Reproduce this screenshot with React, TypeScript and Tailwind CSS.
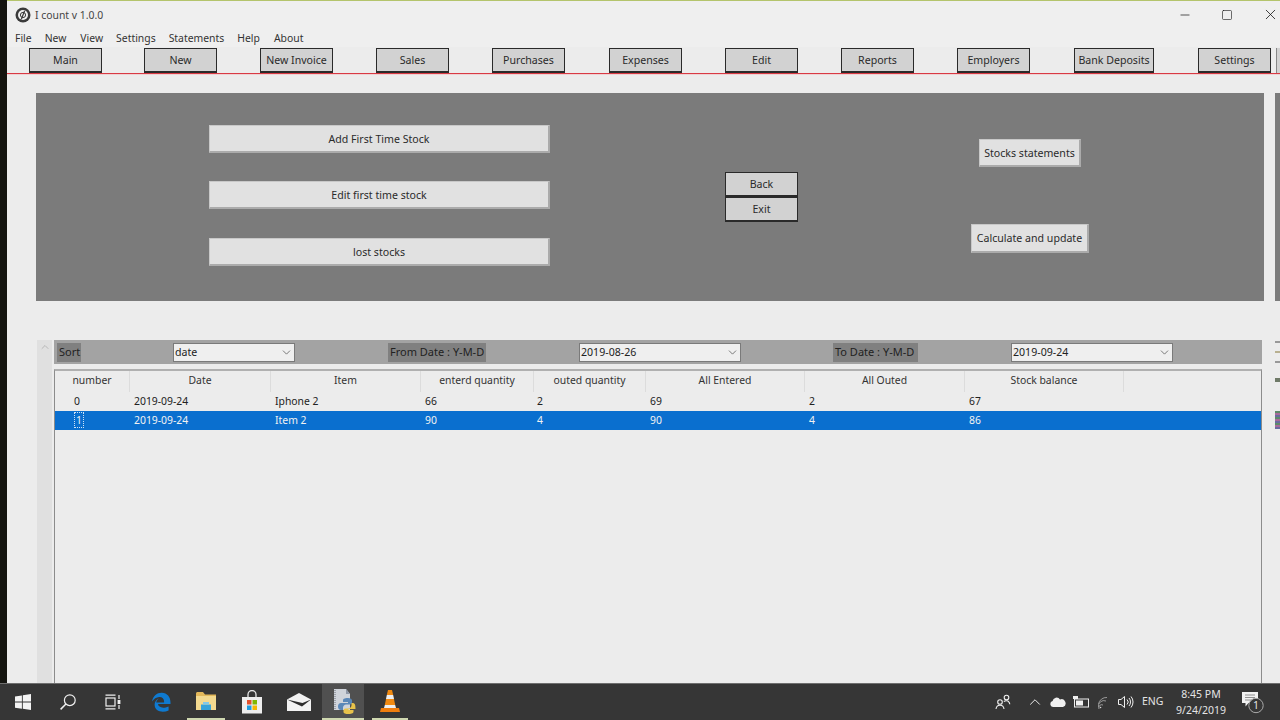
import { ChevronDown, ChevronUp, Minus, Square, X } from "lucide-react";

const tabs = [
  { label: "Main", w: "w-[73px]", ml: "ml-[22px]" },
  { label: "New", w: "w-[73px]", ml: "ml-[42px]" },
  { label: "New Invoice", w: "w-[73px]", ml: "ml-[43px]" },
  { label: "Sales", w: "w-[73px]", ml: "ml-[43px]" },
  { label: "Purchases", w: "w-[73px]", ml: "ml-[43px]" },
  { label: "Expenses", w: "w-[73px]", ml: "ml-[44px]" },
  { label: "Edit", w: "w-[73px]", ml: "ml-[43px]" },
  { label: "Reports", w: "w-[73px]", ml: "ml-[43px]" },
  { label: "Employers", w: "w-[73px]", ml: "ml-[43px]" },
  { label: "Bank Deposits", w: "w-[80px]", ml: "ml-[44px]" },
  { label: "Settings", w: "w-[73px]", ml: "ml-[44px]" },
];

const menus = [
  { label: "File", ml: "ml-[8px]" },
  { label: "New", ml: "ml-[13px]" },
  { label: "View", ml: "ml-[14px]" },
  { label: "Settings", ml: "ml-[13px]" },
  { label: "Statements", ml: "ml-[13px]" },
  { label: "Help", ml: "ml-[13px]" },
  { label: "About", ml: "ml-[14px]" },
];

const columns = [
  { label: "number", w: "w-[75px]", pl: "pl-[19px]" },
  { label: "Date", w: "w-[141px]", pl: "pl-[4px]" },
  { label: "Item", w: "w-[150px]", pl: "pl-[4px]" },
  { label: "enterd quantity", w: "w-[113px]", pl: "pl-[4px]" },
  { label: "outed quantity", w: "w-[112px]", pl: "pl-[3px]" },
  { label: "All Entered", w: "w-[159px]", pl: "pl-[4px]" },
  { label: "All Outed", w: "w-[160px]", pl: "pl-[4px]" },
  { label: "Stock balance", w: "w-[159px]", pl: "pl-[4px]" },
];

const rows = [
  ["0", "2019-09-24", "Iphone 2", "66", "2", "69", "2", "67"],
  ["1", "2019-09-24", "Item 2", "90", "4", "90", "4", "86"],
];

function AppLogo() {
  return (
    <svg width="16" height="16" viewBox="0 0 16 16" className="shrink-0">
      <circle cx="8" cy="8" r="7.5" fill="#3a3a3a" />
      <circle cx="8" cy="8" r="5" fill="#efefef" />
      <circle cx="8" cy="8" r="2.6" fill="none" stroke="#3a3a3a" strokeWidth="1" />
      <path d="M9.600 3.800 6.400 12.200" stroke="#3a3a3a" strokeWidth="1.2" />
    </svg>
  );
}

function PanelButton({ label, className }: { label: string; className: string }) {
  return (
    <button className={`flex items-center justify-center bg-[#e1e1e1] border border-[#c8c8c8] border-b-2 border-r-2 border-b-[#ababab] border-r-[#ababab] pt-[2px] text-[#2a2a2a] ${className}`}>
      {label}
    </button>
  );
}

function DarkButton({ label, className }: { label: string; className: string }) {
  return (
    <button className={`flex items-center justify-center bg-[#d2d2d2] border border-[#2a2a2a] border-b-2 pt-[2px] text-[#2a2a2a] ${className}`}>
      {label}
    </button>
  );
}

function FilterLabel({ label, className }: { label: string; className: string }) {
  return <div className={`h-[19px] flex items-center bg-[#808080] text-[11px] text-[#222] pl-[2px] whitespace-nowrap ${className}`}>{label}</div>;
}

function FilterSelect({ value, className }: { value: string; className: string }) {
  return (
    <div className={`h-[19px] flex items-center justify-between bg-[#efefef] border border-[#7a7a7a] pl-[1px] pr-[1px] text-[#222] ${className}`}>
      <span className="pt-[2px]">{value}</span>
      <ChevronDown size={13} strokeWidth={1.4} color="#555" />
    </div>
  );
}

function WindowsIcon() {
  return (
    <svg width="16" height="16" viewBox="0 0 16 16">
      <path d="M0 2.400 6.900 1.400V7.600H0ZM7.800 1.200 16 0V7.600H7.800ZM0 8.500H6.900V14.700L0 13.700ZM7.800 8.500H16V16L7.800 14.800Z" fill="#f4f4f4" />
    </svg>
  );
}

function SearchIcon() {
  return (
    <svg width="16" height="16" viewBox="0 0 16 16" fill="none" stroke="#f0f0f0" strokeWidth="1.2">
      <circle cx="9.800" cy="6.200" r="5.400" />
      <path d="M5.900 10 .6 15.400" strokeWidth="1.500" />
    </svg>
  );
}

function TaskViewIcon() {
  return (
    <svg width="16" height="16" viewBox="0 0 16 16" fill="none" stroke="#f0f0f0" strokeWidth="1.2">
      <rect x="1" y="4" width="9" height="8" />
      <path d="M0.500 1.200H10.500M0.500 14.800H10.500M14 1V5M14 11V15" />
      <rect x="12.600" y="6" width="2.800" height="4" fill="#f0f0f0" stroke="none" />
    </svg>
  );
}

function EdgeIcon() {
  return (
    <svg width="20" height="20" viewBox="0 0 20 20">
      <path d="M1 9.500C2 3.500 6.500.5 11 .8c5 .3 8.500 4 8.500 9.700v1.600H7c.2 3.200 4.800 5 10.600 2.300v4C11.500 21.300 3.600 19.500 3.600 12.500c0-2.500 1.600-4.800 4.300-6-1.700 1.400-2.400 2.700-2.700 3.900h7.900c.3-3.400-2-5.600-5-5.300C5.600 5.300 2.800 7 1 9.500Z" fill="#0f7ad0" />
    </svg>
  );
}

function FolderIcon() {
  return (
    <svg width="20" height="18" viewBox="0 0 20 18">
      <path d="M0 1.500C0 .7.700 0 1.500 0H7l2 2.500h11V18H0Z" fill="#e3b85a" />
      <rect x="0" y="4" width="20" height="14" fill="#f3d98f" />
      <path d="M5 12.500h10V18H5Z" fill="#36a3d9" />
      <path d="M7 10h6v2.500H7Z" fill="#7fc8ea" />
    </svg>
  );
}

function StoreIcon() {
  return (
    <svg width="22" height="24" viewBox="0 0 22 24">
      <path d="M7 7V4.500a4 4 0 0 1 8 0V7" fill="none" stroke="#e8e8e8" strokeWidth="1.300" />
      <rect x="1" y="7" width="20" height="16.500" fill="#eeeeee" />
      <rect x="6" y="10" width="4.500" height="4.500" fill="#e2502c" />
      <rect x="11.500" y="10" width="4.500" height="4.500" fill="#7fb800" />
      <rect x="6" y="15.500" width="4.500" height="4.500" fill="#1f9de0" />
      <rect x="11.500" y="15.500" width="4.500" height="4.500" fill="#f6b800" />
    </svg>
  );
}

function MailIcon() {
  return (
    <svg width="24" height="18" viewBox="0 0 24 18">
      <path d="M0 6.500 12 0l12 6.500V18H0Z" fill="#f2f2f2" />
      <path d="M0 6.500 15 13.500l9-7-8.500 3.500Z" fill="#2d2d2d" />
    </svg>
  );
}

function PythonFileIcon() {
  return (
    <svg width="23" height="25" viewBox="0 0 23 25">
      <path d="M1 0H13L17 5V21H1Z" fill="#cfd3da" />
      <path d="M2 1V20" stroke="#8b8f96" strokeWidth="1.500" strokeDasharray="1 1" />
      <path d="M13 0V5H17Z" fill="#8f98a8" />
      <path d="M15 9c-4 0-5 1-5 2.500V13h5v1H8c-2 0-3 1.500-3 3.500S6 21 8 21h2v-2.500c0-1.500 1.500-3 3-3h4c1.500 0 2-1 2-2V11.500C19 10 17.500 9 15 9Z" fill="#5a87b8" />
      <path d="M15.500 25c4 0 5-1 5-2.500V21h-5v-1h7c0-4-.5-6-3-6h-1v2.500c0 1.500-1.500 3-3 3h-3c-1.500 0-2 1-2 2V23c0 1.500 2 2 5 2Z" fill="#e8c24a" />
    </svg>
  );
}

function VlcIcon() {
  return (
    <svg width="20" height="24" viewBox="0 0 20 24">
      <path d="M8 1h4l1.200 5H6.800Z" fill="#f08a12" />
      <path d="M6.800 6h6.400l.8 4H6Z" fill="#efefef" />
      <path d="M6 10h8l1.200 6H4.800Z" fill="#f08a12" />
      <path d="M4.800 16h10.400l.8 3H4Z" fill="#efefef" />
      <path d="M1 19h18l1 4H0Z" fill="#ef7d0e" />
    </svg>
  );
}

function PeopleIcon() {
  return (
    <svg width="16" height="16" viewBox="0 0 16 16" fill="none" stroke="#f0f0f0" strokeWidth="1.100">
      <circle cx="5" cy="8" r="2.300" />
      <path d="M1 15c.3-2.500 1.800-3.800 4-3.800S8.700 12.500 9 15" />
      <circle cx="11.500" cy="3.500" r="2.300" />
      <path d="M8.800 7.500c1.500-1 4-1 5 .3.600.7.900 1.500 1 2.500" />
    </svg>
  );
}

function CloudIcon() {
  return (
    <svg width="16" height="10" viewBox="0 0 16 10">
      <path d="M3 10a3 3 0 0 1-.4-5.900A4 4 0 0 1 10 2.500 3.500 3.500 0 0 1 13 10Z" fill="#efefef" />
    </svg>
  );
}

function BatteryIcon() {
  return (
    <svg width="16" height="12" viewBox="0 0 16 12" fill="none">
      <rect x="1.500" y="3" width="14" height="8" stroke="#efefef" />
      <rect x="3" y="4.500" width="7" height="5" fill="#efefef" />
      <path d="M0 0H5V3H0Z" fill="#efefef" />
    </svg>
  );
}

function WifiIcon() {
  return (
    <svg width="13" height="13" viewBox="0 0 13 13" fill="none" stroke="#9a9a9a" strokeWidth="1">
      <path d="M.5 8A8 8 0 0 1 9 1.500M.5 11A5.500 5.500 0 0 1 8 5M1 13a3 3 0 0 1 4-4" />
      <circle cx="2.500" cy="11.500" r=".8" fill="#d8d8d8" stroke="none" />
    </svg>
  );
}

function SpeakerIcon() {
  return (
    <svg width="16" height="14" viewBox="0 0 16 14" fill="none" stroke="#efefef" strokeWidth="1">
      <path d="M.5 4.500H3L6.500 1.500V12.500L3 9.500H.5Z" />
      <path d="M9 4.500a3.500 3.500 0 0 1 0 5M11 3a6 6 0 0 1 0 8M13 1.500a8.500 8.500 0 0 1 0 11" />
    </svg>
  );
}

function NotificationIcon() {
  return (
    <svg width="24" height="24" viewBox="0 0 24 24">
      <path d="M1 2H17V13H7.500L4.500 16.500V13H1Z" fill="#f2f2f2" />
      <path d="M4 5H14M4 7.500H14M4 10H11" stroke="#777" strokeWidth=".8" />
      <circle cx="15" cy="15.500" r="7.200" fill="#363636" stroke="#aaa" strokeWidth="1" />
    </svg>
  );
}

function Taskbar() {
  return (
    <div className="h-[37px] shrink-0 flex items-stretch bg-[#363636] border-t border-[#6e6e6e] text-[#e4e4e4]">
      <div className="w-[45px] flex items-center justify-center"><WindowsIcon /></div>
      <div className="w-[45px] flex items-center justify-center"><SearchIcon /></div>
      <div className="w-[46px] flex items-center justify-center"><TaskViewIcon /></div>
      <div className="w-[49px] flex items-center justify-center"><EdgeIcon /></div>
      <div className="ml-[2px] w-[38px] flex items-center justify-center border-b-2 border-[#cfd8b0]"><FolderIcon /></div>
      <div className="w-[54px] flex items-center justify-center"><StoreIcon /></div>
      <div className="w-[39px] flex items-center justify-center"><MailIcon /></div>
      <div className="ml-[4px] w-[42px] pl-[3px] flex items-center justify-center bg-[#505050] border-b-2 border-[#cfd8b0]"><PythonFileIcon /></div>
      <div className="ml-[8px] w-[36px] flex items-center justify-center border-b-2 border-[#cfd8b0]"><VlcIcon /></div>
      <div className="flex-1 flex items-center justify-end text-[10.5px]">
        <PeopleIcon />
        <ChevronUp size={18} strokeWidth={1.3} color="#efefef" className="ml-[15px]" />
        <div className="ml-[6px]"><CloudIcon /></div>
        <div className="ml-[7px]"><BatteryIcon /></div>
        <div className="ml-[9px]"><WifiIcon /></div>
        <div className="ml-[7px]"><SpeakerIcon /></div>
        <span className="ml-[8px] w-[24px]">ENG</span>
        <div className="ml-[7px] w-[56px] flex flex-col items-center leading-[16px]">
          <span>8:45 PM</span>
          <span>9/24/2019</span>
        </div>
        <div className="relative ml-[12px] mr-[15px] w-[24px] h-[24px]">
          <NotificationIcon />
          <span className="absolute left-[12px] top-[8px] text-[10.5px] leading-[14px]">1</span>
        </div>
      </div>
    </div>
  );
}

export default function App() {
  return (
    <div className="w-[1280px] h-[720px] flex flex-col overflow-hidden bg-[#ececec] text-[10.6px] font-['Noto_Sans','Open_Sans',sans-serif] text-[#222]">
      <div className="flex-1 flex min-h-0">
        <div className="w-[7px] shrink-0 bg-[#14140f]" />
        <div className="flex-1 min-w-0 flex flex-col border-t border-[#b4c46c] relative">
          {/* title bar */}
          <div className="h-[27px] shrink-0 flex items-center pl-[8px] bg-[#efefef]">
            <AppLogo />
            <span className="ml-[4px] pt-[2px] text-[10.4px] text-[#444]">I count v 1.0.0</span>
            <div className="ml-auto flex items-center mr-[1px]">
              <Minus size={14} strokeWidth={1.2} color="#111" />
              <Square size={12} strokeWidth={1.2} color="#111" className="ml-[29px]" />
              <X size={17} strokeWidth={1.1} color="#111" className="ml-[29px]" />
            </div>
          </div>
          {/* menu */}
          <div className="h-[19px] shrink-0 flex items-center pt-[2px] text-[10.4px] text-[#333] bg-[#efefef]">
            {menus.map((m) => (
              <span key={m.label} className={m.ml}>{m.label}</span>
            ))}
          </div>
          {/* tabs */}
          <div className="h-[27px] shrink-0 flex items-start border-b border-[#d83a44] shadow-[0_1px_0_#efd0d2] pt-[1px] overflow-hidden">
            {tabs.map((t) => (
              <DarkButton key={t.label} label={t.label} className={`h-[25px] shrink-0 ${t.w} ${t.ml}`} />
            ))}
            <div className="ml-[5px] w-[20px] h-[25px] shrink-0 bg-[#d2d2d2] border-l border-[#888]" />
          </div>

          {/* top panel */}
          <div className="h-[208px] mt-[19px] shrink-0 flex">
            <div className="ml-[29px] w-[1229px] bg-[#7b7b7b] flex">
              <div className="ml-[173px] mt-[32px] w-[341px] flex flex-col">
                <PanelButton label="Add First Time Stock" className="h-[28px]" />
                <PanelButton label="Edit first time stock" className="h-[28px] mt-[28px]" />
                <PanelButton label="lost stocks" className="h-[28px] mt-[29px]" />
              </div>
              <div className="ml-[175px] mt-[79px] w-[73px] flex flex-col">
                <DarkButton label="Back" className="h-[25px]" />
                <DarkButton label="Exit" className="h-[25px]" />
              </div>
              <div className="ml-[173px] mt-[46px] w-[118px] flex flex-col items-center gap-[57px]">
                <PanelButton label="Stocks statements" className="h-[28px] w-[102px]" />
                <PanelButton label="Calculate and update" className="h-[29px] w-[118px]" />
              </div>
            </div>
            <div className="ml-[11px] w-[5px] bg-[#7b7b7b]" />
          </div>

          {/* lower section */}
          <div className="flex-1 min-h-0 mt-[39px] flex">
            <div className="ml-[30px] mr-[2px] w-[15px] shrink-0 bg-[#e0e0e0] flex justify-center pt-[1px]">
              <ChevronUp size={12} strokeWidth={1.5} color="#aaa" />
            </div>
            <div className="w-[1208px] flex flex-col">
              <div className="h-[24px] shrink-0 flex items-center bg-[#a3a3a3]">
                <FilterLabel label="Sort" className="ml-[3px] w-[24px]" />
                <FilterSelect value="date" className="ml-[92px] w-[122px]" />
                <FilterLabel label="From Date : Y-M-D" className="ml-[93px] w-[98px]" />
                <FilterSelect value="2019-08-26" className="ml-[93px] w-[162px]" />
                <FilterLabel label="To Date : Y-M-D" className="ml-[92px] w-[85px]" />
                <FilterSelect value="2019-09-24" className="ml-[93px] w-[162px]" />
              </div>
              <div className="flex-1 mt-[5px] border-t-2 border-[#b0b0b0] border-l border-l-[#8c8c8c] border-r border-r-[#8c8c8c] text-[10.4px]">
                <div className="h-[21px] flex text-[#333]">
                  {columns.map((c) => (
                    <div key={c.label} className={`${c.w} flex items-center justify-center border-r border-[#dcdcdc] pb-[2px]`}>
                      {c.label}
                    </div>
                  ))}
                </div>
                <div className="h-[19px] flex items-center text-[#222]">
                  {rows[0].map((v, i) => (
                    <div key={i} className={`${columns[i].w} ${columns[i].pl}`}>{v}</div>
                  ))}
                </div>
                <div className="h-[19px] flex items-center bg-[#0a6fcf] text-[#f2f2f2]">
                  {rows[1].map((v, i) => (
                    <div key={i} className={`${columns[i].w} ${columns[i].pl}`}>
                      {i === 0 ? <span className="border border-dotted border-[#cfe2f5] px-[1px]">{v}</span> : v}
                    </div>
                  ))}
                </div>
              </div>
            </div>
            <div className="ml-[13px] flex-1 flex flex-col">
              <div className="h-[2px] mt-[1px] bg-[#999]" />
              <div className="h-[2px] mt-[8px] bg-[#b8b090]" />
              <div className="h-[2px] mt-[8px] bg-[#999]" />
              <div className="h-[4px] mt-[15px] bg-[#6f7a68]" />
              <div className="h-[18px] mt-[29px] bg-[repeating-linear-gradient(180deg,#5d8a6a_0_2px,#a86a9a_2px_4px,#6a6aa0_4px_6px)]" />
            </div>
          </div>
        </div>
      </div>
      <Taskbar />
    </div>
  );
}
